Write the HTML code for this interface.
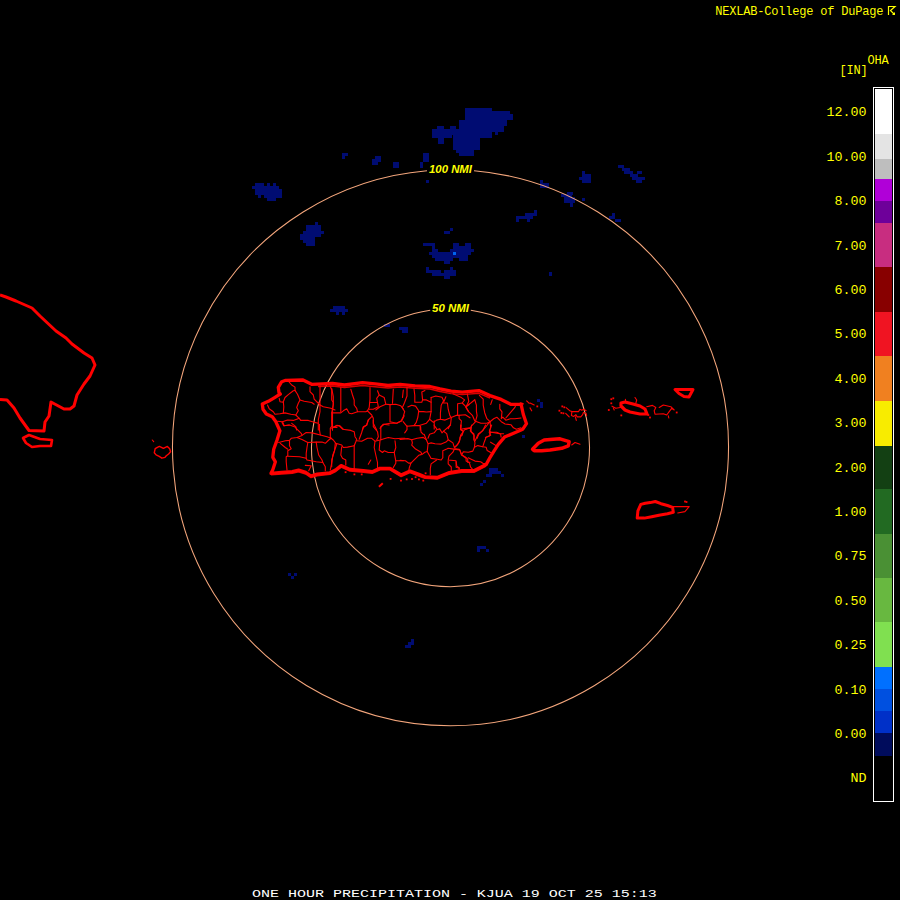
<!DOCTYPE html>
<html><head><meta charset="utf-8"><title>One Hour Precipitation - KJUA</title>
<style>html,body{margin:0;padding:0;background:#000;width:900px;height:900px;overflow:hidden}svg{display:block}</style>
</head><body>
<svg width="900" height="900" viewBox="0 0 900 900">
<rect x="0" y="0" width="900" height="900" fill="#000"/>
<g fill="#000c72" shape-rendering="crispEdges">
<rect x="465" y="108" width="27" height="3"/>
<rect x="465" y="111" width="45" height="3"/>
<rect x="465" y="114" width="48" height="6"/>
<rect x="459" y="120" width="48" height="6"/>
<rect x="437" y="126" width="7" height="3"/>
<rect x="450" y="126" width="6" height="3"/>
<rect x="459" y="126" width="45" height="3"/>
<rect x="432" y="129" width="72" height="3"/>
<rect x="432" y="132" width="60" height="3"/>
<rect x="495" y="132" width="3" height="3"/>
<rect x="432" y="135" width="20" height="3"/>
<rect x="453" y="135" width="39" height="3"/>
<rect x="438" y="138" width="6" height="6"/>
<rect x="453" y="138" width="27" height="12"/>
<rect x="456" y="150" width="18" height="3"/>
<rect x="459" y="153" width="15" height="3"/>
<rect x="255" y="183" width="9" height="3"/>
<rect x="267" y="183" width="3" height="3"/>
<rect x="273" y="183" width="3" height="3"/>
<rect x="252" y="186" width="27" height="3"/>
<rect x="255" y="189" width="27" height="6"/>
<rect x="258" y="195" width="3" height="3"/>
<rect x="264" y="195" width="18" height="3"/>
<rect x="267" y="198" width="9" height="3"/>
<rect x="315" y="222" width="3" height="3"/>
<rect x="306" y="225" width="15" height="6"/>
<rect x="303" y="231" width="18" height="6"/>
<rect x="321" y="231" width="3" height="3"/>
<rect x="300" y="234" width="3" height="6"/>
<rect x="303" y="237" width="12" height="6"/>
<rect x="306" y="243" width="9" height="3"/>
<rect x="342" y="153" width="6" height="3"/>
<rect x="342" y="156" width="3" height="3"/>
<rect x="375" y="156" width="6" height="6"/>
<rect x="372" y="159" width="6" height="6"/>
<rect x="393" y="162" width="6" height="6"/>
<rect x="423" y="153" width="6" height="9"/>
<rect x="420" y="162" width="3" height="6"/>
<rect x="426" y="180" width="3" height="3"/>
<rect x="444" y="231" width="6" height="3"/>
<rect x="450" y="228" width="3" height="3"/>
<rect x="423" y="243" width="12" height="3"/>
<rect x="453" y="243" width="6" height="3"/>
<rect x="465" y="243" width="6" height="3"/>
<rect x="432" y="246" width="3" height="3"/>
<rect x="453" y="246" width="18" height="3"/>
<rect x="432" y="249" width="6" height="3"/>
<rect x="450" y="249" width="24" height="3"/>
<rect x="429" y="252" width="42" height="3"/>
<rect x="432" y="255" width="36" height="3"/>
<rect x="435" y="258" width="18" height="3"/>
<rect x="459" y="258" width="9" height="3"/>
<rect x="444" y="261" width="6" height="3"/>
<rect x="426" y="267" width="3" height="3"/>
<rect x="450" y="267" width="3" height="3"/>
<rect x="426" y="270" width="15" height="3"/>
<rect x="444" y="270" width="12" height="3"/>
<rect x="432" y="273" width="24" height="3"/>
<rect x="444" y="276" width="6" height="3"/>
<rect x="582" y="171" width="3" height="3"/>
<rect x="582" y="174" width="9" height="9"/>
<rect x="579" y="177" width="3" height="3"/>
<rect x="618" y="165" width="6" height="3"/>
<rect x="622" y="168" width="8" height="3"/>
<rect x="624" y="171" width="9" height="3"/>
<rect x="630" y="174" width="8" height="3"/>
<rect x="637" y="171" width="5" height="3"/>
<rect x="632" y="177" width="13" height="3"/>
<rect x="636" y="180" width="6" height="3"/>
<rect x="540" y="180" width="3" height="3"/>
<rect x="540" y="183" width="9" height="5"/>
<rect x="567" y="192" width="6" height="3"/>
<rect x="561" y="194" width="11" height="3"/>
<rect x="564" y="197" width="11" height="6"/>
<rect x="570" y="203" width="3" height="4"/>
<rect x="582" y="198" width="3" height="3"/>
<rect x="534" y="210" width="3" height="3"/>
<rect x="525" y="213" width="12" height="3"/>
<rect x="516" y="216" width="17" height="3"/>
<rect x="516" y="219" width="3" height="3"/>
<rect x="527" y="219" width="3" height="3"/>
<rect x="612" y="213" width="3" height="3"/>
<rect x="609" y="216" width="6" height="3"/>
<rect x="615" y="219" width="6" height="3"/>
<rect x="333" y="306" width="12" height="3"/>
<rect x="330" y="309" width="18" height="3"/>
<rect x="336" y="312" width="3" height="3"/>
<rect x="342" y="312" width="3" height="3"/>
<rect x="384" y="324" width="6" height="3"/>
<rect x="399" y="327" width="9" height="3"/>
<rect x="402" y="330" width="6" height="3"/>
<rect x="549" y="272" width="3" height="4"/>
<rect x="489" y="468" width="9" height="3"/>
<rect x="489" y="471" width="12" height="3"/>
<rect x="486" y="474" width="6" height="3"/>
<rect x="501" y="474" width="3" height="3"/>
<rect x="483" y="480" width="3" height="3"/>
<rect x="480" y="483" width="3" height="3"/>
<rect x="522" y="435" width="3" height="3"/>
<rect x="537" y="399" width="3" height="3"/>
<rect x="540" y="402" width="3" height="6"/>
<rect x="477" y="546" width="9" height="3"/>
<rect x="477" y="549" width="3" height="3"/>
<rect x="486" y="549" width="3" height="3"/>
<rect x="288" y="573" width="3" height="3"/>
<rect x="294" y="573" width="3" height="3"/>
<rect x="291" y="576" width="3" height="3"/>
<rect x="411" y="639" width="3" height="6"/>
<rect x="408" y="642" width="3" height="3"/>
<rect x="405" y="645" width="6" height="3"/>
</g>
<g fill="#0064f0" shape-rendering="crispEdges">
<rect x="453" y="252" width="3" height="3"/>
</g>
<g fill="none" stroke="#f4a67c" stroke-width="1.05">
<path d="M 474.00 170.75 A 278 278 0 1 1 427.00 170.75"/>
<path d="M 470.80 310.24 A 139 139 0 1 1 430.20 310.24"/>
</g>
<g fill="none" stroke="#ff0000" stroke-linejoin="round">
<polygon points="281.7,381.7 285.7,380.3 303.0,380.0 311.7,384.3 332.5,383.5 344.5,385.0 362.5,382.7 377.5,384.2 388.0,385.5 400.0,384.3 415.0,385.8 430.0,386.5 440.0,388.9 451.1,391.1 462.2,392.2 478.9,390.6 490.0,395.6 501.1,399.4 511.1,404.4 521.1,404.4 523.3,414.4 526.5,423.7 522.8,429.2 513.0,433.4 504.5,437.1 498.3,444.4 493.5,451.8 489.8,457.9 486.1,464.6 473.9,470.7 461.7,470.7 449.4,472.6 437.2,477.5 425.0,476.8 418.9,474.4 410.0,471.1 401.1,475.0 390.0,468.3 380.0,468.3 372.2,471.7 363.3,470.6 350.0,469.4 341.1,465.6 335.6,470.0 330.0,472.8 317.2,474.2 311.0,476.0 305.7,472.4 298.6,470.2 292.3,471.6 281.7,472.4 271.0,473.3 272.8,469.8 275.4,461.8 272.8,457.3 273.7,449.3 277.2,439.6 279.9,430.7 275.4,420.9 272.3,416.7 266.3,414.0 263.0,409.3 262.3,404.0 268.3,401.3 275.0,397.3 280.3,394.0 279.0,392.7 278.3,387.3" stroke-width="3.3"/>
<polyline points="0.0,295.0 6.0,297.0 16.0,301.0 32.0,308.0 40.0,316.0 56.0,331.0 66.0,338.0 72.0,344.0 84.0,353.0 92.0,358.0 95.0,365.0 90.0,376.0 84.0,384.0 77.0,395.0 74.0,406.0 70.0,409.0 64.0,409.0 51.0,402.0 49.0,416.0 45.0,422.0 44.0,431.0 29.0,430.5 20.0,418.0 14.0,408.0 7.0,400.0 0.0,399.6" stroke-width="3"/>
<polyline points="318.0,386.5 332.5,386.0 344.5,387.5 362.5,385.5 377.5,387.0 388.0,388.0 400.0,387.0 415.0,388.3 430.0,389.0 440.0,391.5 451.1,393.6 462.2,394.6 478.9,393.3 490.0,398.0" stroke-width="1.4" opacity="0.85"/>
<polyline points="486.1,466.1 473.9,472.2 461.7,472.2 449.4,474.1 437.2,479.0 425.0,478.3 418.9,475.9 410.0,472.6 401.1,476.5 390.0,469.8 380.0,469.8 372.2,473.2 363.3,472.1 350.0,470.9 341.1,467.1 335.6,471.5 330.0,474.3 317.2,475.7 311.0,477.5 305.7,473.9 298.6,471.7 292.3,473.1 281.7,473.9 271.0,474.8" stroke-width="1.6" opacity="0.9"/>
<polyline points="378.9,486.7 382.8,483.3" stroke-width="2"/>
<polygon points="23.0,438.0 29.0,435.0 40.0,439.0 52.0,440.0 51.0,446.0 40.0,446.0 32.0,447.0 26.0,443.0" stroke-width="2.6"/>
<polygon points="155.2,448.7 157.4,447.3 159.4,446.4 161.4,447.3 163.4,448.4 165.4,447.3 167.4,446.4 169.7,448.7 170.6,451.8 168.6,454.0 166.3,455.8 165.0,457.3 161.9,458.2 159.2,456.4 156.1,454.9 154.3,452.7" stroke-width="1.4"/>
<polygon points="532.5,449.2 538.3,443.3 544.2,440.0 553.3,439.2 560.0,438.8 569.2,441.7 568.3,445.8 561.7,448.3 550.0,450.0 541.7,450.8 534.2,450.8" stroke-width="3.4"/>
<polygon points="621.0,403.0 625.0,402.0 633.0,404.0 640.0,406.0 645.0,409.0 647.0,414.0 640.0,414.0 630.0,412.0 625.0,410.0 621.0,406.0" stroke-width="3.2"/>
<polygon points="675.0,389.5 693.0,389.5 689.0,397.0 684.0,396.5 679.0,393.5" stroke-width="3"/>
<polygon points="637.2,518.1 637.9,510.9 640.8,504.4 645.2,503.3 650.2,502.6 655.3,501.5 661.0,503.7 667.5,505.5 672.6,507.3 673.3,512.3 667.5,513.8 658.9,515.2 651.7,516.7 644.4,518.1" stroke-width="3"/>
</g>
<g fill="none" stroke="#ff0000" stroke-width="1.1" stroke-linejoin="round" stroke-linecap="round">
<polyline points="566.1,407.6 569.7,410.7 571.9,411.6 578.6,411.6 579.9,409.3 581.7,410.2 583.9,409.3 586.1,410.7"/>
<polyline points="571.9,411.6 571.4,415.6 573.7,416.4 575.9,414.7 577.2,416.9 580.8,416.9 582.6,414.7 583.4,412.4 586.1,413.3 586.6,415.6"/>
<polyline points="575.4,416.9 576.3,420.4"/>
<polyline points="565.7,413.3 569.2,416.9"/>
<polyline points="571.7,445.0 575.0,442.5 580.0,444.2"/>
<polyline points="646.7,406.7 652.5,405.4 655.8,407.5 654.2,410.8 655.0,414.2 663.3,413.8 666.7,415.0 669.2,411.7 671.7,408.3 674.2,410.0 670.8,406.7 663.3,405.0 659.2,407.5"/>
<polyline points="612.0,406.2 615.8,408.3 620.4,407.5"/>
<polyline points="613.3,407.9 614.2,410.0"/>
<polyline points="635.0,397.5 636.7,400.0 635.8,403.3"/>
<polyline points="625.4,399.2 625.8,402.5"/>
<polyline points="668.3,415.8 668.8,418.0"/>
<polyline points="673.3,506.6 689.2,506.6 684.9,511.6 677.7,513.0"/>
<polyline points="152.3,440.0 153.7,441.6"/>
<polyline points="526.7,400.8 529.2,403.3"/>
<polyline points="530.0,402.9 534.2,405.0"/>
<polyline points="530.0,407.9 531.7,410.8"/>
</g>
<g fill="#ff0000">
<rect x="389.7" y="478.0" width="1.8" height="1.8"/>
<rect x="400.1" y="479.7" width="1.8" height="1.8"/>
<rect x="405.8" y="478.5" width="1.8" height="1.8"/>
<rect x="411.1" y="478.1" width="1.8" height="1.8"/>
<rect x="414.7" y="476.3" width="1.8" height="1.8"/>
<rect x="418.0" y="478.5" width="1.8" height="1.8"/>
<rect x="422.4" y="479.7" width="1.8" height="1.8"/>
<rect x="353.5" y="473.5" width="1.8" height="1.8"/>
<rect x="360.8" y="473.5" width="1.8" height="1.8"/>
<rect x="344.7" y="471.3" width="1.8" height="1.8"/>
<rect x="424.7" y="472.4" width="1.8" height="1.8"/>
<rect x="561.4" y="405.5" width="1.8" height="1.8"/>
<rect x="563.4" y="406.4" width="1.8" height="1.8"/>
<rect x="558.5" y="409.8" width="1.8" height="1.8"/>
<rect x="560.5" y="412.0" width="1.8" height="1.8"/>
<rect x="562.5" y="412.4" width="1.8" height="1.8"/>
<rect x="607.9" y="409.1" width="1.8" height="1.8"/>
<rect x="610.4" y="398.3" width="1.8" height="1.8"/>
<rect x="612.4" y="397.4" width="1.8" height="1.8"/>
<rect x="610.4" y="402.4" width="1.8" height="1.8"/>
<rect x="620.4" y="414.5" width="1.8" height="1.8"/>
<rect x="675.8" y="411.6" width="1.8" height="1.8"/>
<rect x="647.4" y="414.1" width="1.8" height="1.8"/>
<rect x="649.1" y="416.6" width="1.8" height="1.8"/>
<rect x="536.4" y="405.5" width="1.8" height="1.8"/>
<rect x="684.1" y="500.6" width="1.8" height="1.8"/>
<rect x="685.6" y="501.1" width="1.8" height="1.8"/>
</g>
<g fill="none" stroke="#ff0000" stroke-width="1.1" stroke-linejoin="round" stroke-linecap="round">
<polyline points="289.2,382.1 291.7,385.0 295.0,387.1 295.0,390.4 293.3,390.8 288.3,394.6 285.0,397.5 283.3,401.7 283.8,406.7 283.3,413.3"/>
<polyline points="295.0,390.4 297.5,394.2 300.0,400.0 298.3,403.3 296.7,407.5 298.3,410.8 295.8,415.0 299.2,418.3 300.8,420.4"/>
<polyline points="300.0,400.0 304.2,401.2 311.7,402.5 314.2,404.2"/>
<polyline points="279.2,398.3 280.0,401.7 283.3,402.1"/>
<polyline points="267.5,405.0 269.2,408.8 273.3,411.7 275.0,414.2 280.0,413.8 285.0,412.9 290.8,414.2 295.8,415.0"/>
<polyline points="300.8,420.4 308.3,420.4 313.3,422.1 318.3,423.3"/>
<polyline points="277.5,421.2 282.5,421.7 287.5,420.0 293.3,420.4 296.7,419.2 299.2,418.3"/>
<polyline points="282.5,421.7 284.2,425.8 289.2,425.0"/>
<polyline points="291.7,423.3 295.8,426.7 296.7,430.0"/>
<polyline points="320.0,385.8 320.0,405.0 320.0,411.7 318.3,420.0 318.3,430.0"/>
<polyline points="310.0,386.7 310.0,391.7 313.3,395.0 314.2,399.2 317.5,402.5 320.0,405.0"/>
<polyline points="320.0,405.0 323.3,406.7 330.8,408.3 335.0,410.0"/>
<polyline points="330.0,385.8 331.7,390.0 331.7,400.0 333.3,402.5 332.5,412.5 332.5,425.0 332.5,430.0"/>
<polyline points="278.7,442.5 285.3,440.8 289.5,440.4 291.2,438.3 297.0,437.5 302.0,435.4 306.2,432.5 312.0,432.9 320.3,435.0 327.0,436.7 331.2,438.3"/>
<polyline points="297.0,437.5 302.0,439.6 307.8,442.5 316.2,442.1 322.0,442.1 325.3,443.3 328.7,440.0 331.2,438.3"/>
<polyline points="289.5,440.4 289.5,445.8 291.2,448.8 287.8,450.8 287.8,455.8 286.2,456.7 286.2,461.7 287.0,470.0"/>
<polyline points="280.3,443.3 285.3,447.5 287.8,449.2"/>
<polyline points="287.8,456.2 299.5,456.7 306.2,458.3 307.0,460.0 311.2,460.8"/>
<polyline points="307.8,442.5 307.0,447.5 306.2,453.3 306.2,458.3"/>
<polyline points="311.2,460.8 316.2,461.7 322.8,462.5 325.3,466.7 325.3,470.8"/>
<polyline points="305.3,465.4 311.2,465.8 308.7,470.8"/>
<polyline points="316.2,442.1 317.0,447.5 318.7,455.0 322.0,460.0 322.8,462.5"/>
<polyline points="335.3,443.3 334.5,450.8 332.8,455.0 332.0,461.7 330.3,470.0"/>
<polyline points="282.0,422.5 283.7,425.8 289.5,425.0 294.5,426.7 298.7,430.8 301.2,433.3 302.0,435.4"/>
<polyline points="319.5,424.2 319.5,430.0 320.3,435.0"/>
<polyline points="332.0,420.0 332.0,425.8 330.3,428.3 330.3,438.3"/>
<polyline points="332.8,427.5 337.0,427.5"/>
<polyline points="331.7,388.3 333.3,396.7 333.3,405.0 331.7,412.5 331.7,421.7 332.5,430.0"/>
<polyline points="340.8,387.5 340.8,396.7 340.8,411.7"/>
<polyline points="331.7,412.9 340.8,412.9 343.3,410.8 346.7,408.8 349.2,413.3 351.7,413.8 357.5,411.7 365.8,411.7 367.5,410.8"/>
<polyline points="350.8,389.2 352.5,395.0 354.2,400.0 354.2,405.0 356.7,408.3 357.5,411.7"/>
<polyline points="370.0,387.5 370.0,399.2 369.2,407.5 367.5,410.8"/>
<polyline points="370.0,402.5 377.5,402.5 378.3,406.7 373.3,409.2 369.2,409.2"/>
<polyline points="377.5,390.8 379.2,395.0 376.7,398.3 377.5,402.5"/>
<polyline points="379.2,395.0 384.2,397.5 385.8,404.2 380.0,406.7 375.8,410.0"/>
<polyline points="385.8,404.2 390.0,404.6 395.8,404.2 400.8,405.8 403.3,409.2"/>
<polyline points="393.3,389.2 392.5,403.3"/>
<polyline points="390.0,404.6 390.0,421.7 396.7,423.3 401.7,420.8 404.2,415.8"/>
<polyline points="367.5,410.8 371.7,415.0 373.3,418.3 373.3,423.3 376.7,430.0"/>
<polyline points="371.7,416.7 368.3,420.0 366.7,425.0 363.3,427.5 362.5,430.0"/>
<polyline points="332.5,427.5 336.7,425.4 340.0,425.8 343.3,429.2"/>
<polyline points="389.2,425.0 383.3,424.2 380.0,428.3"/>
<polyline points="403.3,390.0 402.5,397.5"/>
<polyline points="331.7,428.3 336.7,425.8 339.2,425.8 342.5,429.2 350.8,430.4 354.2,431.7 355.0,436.7 356.7,439.2 355.8,441.7 354.2,445.8"/>
<polyline points="330.0,437.5 333.3,440.0 335.8,443.3 341.7,445.0 343.3,447.5 347.5,447.1 354.2,445.8"/>
<polyline points="354.2,445.8 354.2,457.5 354.2,469.2"/>
<polyline points="336.7,444.2 335.0,449.2 333.3,455.0 331.7,460.0 331.7,466.7"/>
<polyline points="341.7,446.7 340.8,455.0 342.5,458.3 345.8,460.0 345.8,465.0"/>
<polyline points="356.7,440.8 361.7,441.2 367.5,438.3 371.7,438.3 375.0,441.2 380.0,440.0 388.3,437.5 395.0,438.8 401.7,438.3 405.0,438.3"/>
<polyline points="359.2,439.2 361.7,432.5 363.3,426.7 366.7,425.0 368.3,420.0"/>
<polyline points="373.3,420.0 373.3,426.7 377.5,431.7 378.3,436.7 376.7,440.0"/>
<polyline points="375.0,441.2 374.2,447.5 375.8,455.0 377.5,462.5 377.5,467.5"/>
<polyline points="380.0,440.8 379.2,450.0 382.5,452.5 384.2,450.8 388.3,452.5 394.2,452.5 395.8,447.5 395.0,440.8"/>
<polyline points="380.8,440.0 380.8,430.0 380.8,426.7 384.2,424.2 390.0,423.3 396.7,423.3 401.7,420.8"/>
<polyline points="394.2,452.5 395.8,460.8 403.3,460.8"/>
<polyline points="395.8,460.8 395.8,463.3 393.3,467.5"/>
<polyline points="368.3,464.2 370.8,460.0"/>
<polyline points="407.0,387.4 407.0,396.0 404.7,402.2 402.3,407.7 404.7,411.6 403.1,417.0 401.6,420.1"/>
<polyline points="414.0,389.0 414.8,395.2 414.8,402.2 421.8,402.2 422.6,399.9 426.4,399.9 431.1,402.2"/>
<polyline points="422.6,399.9 421.8,392.1 424.9,390.6"/>
<polyline points="431.1,397.6 431.1,411.6 429.6,419.3 426.4,423.2 419.4,425.6 414.0,425.6 407.0,426.3 403.1,421.7"/>
<polyline points="407.8,406.9 411.7,405.3 415.6,406.1 418.7,410.8 417.9,417.0 416.3,422.4 414.0,425.6"/>
<polyline points="418.7,411.6 423.3,411.6 426.4,412.0 431.1,411.6"/>
<polyline points="431.1,397.6 435.8,396.0 442.0,397.2 443.6,400.7 441.2,405.3 440.4,413.1 440.4,419.3 445.1,420.1 450.6,417.8 456.0,415.4 458.3,415.4 465.3,414.7 470.0,417.8"/>
<polyline points="429.6,419.3 433.4,422.4 436.6,420.1 440.4,419.3"/>
<polyline points="443.6,403.0 447.4,403.0 448.2,409.2 449.8,415.4 451.3,417.8 450.6,424.0 448.2,428.7"/>
<polyline points="445.9,396.8 443.6,402.2"/>
<polyline points="452.9,393.7 461.4,397.6 464.6,399.9 462.2,403.0 457.6,403.8 457.6,414.7"/>
<polyline points="462.2,403.0 466.1,406.9 469.2,404.6"/>
<polyline points="459.1,415.4 459.1,418.6 461.4,420.9 460.7,427.9"/>
<polyline points="434.2,420.9 434.2,425.6 436.6,428.7"/>
<polyline points="420.2,426.3 420.2,430.0"/>
<polyline points="466.1,406.9 468.4,411.6"/>
<polyline points="400.0,439.4 407.8,438.6 411.7,439.8 412.4,442.9 411.7,445.2 415.6,449.1 421.0,452.2 421.8,454.6 424.9,452.2 427.2,451.4"/>
<polyline points="411.7,439.8 417.1,438.2 423.3,437.4 426.4,439.8 428.0,443.7 431.1,442.9 435.0,443.7 441.2,444.1 445.9,442.1 448.2,439.8 446.7,433.6 443.6,431.2 442.0,432.8 439.7,428.9 436.6,429.7 434.2,432.8 429.6,434.3 428.0,438.2"/>
<polyline points="423.3,434.3 421.0,432.0 420.6,426.6"/>
<polyline points="426.4,439.8 424.1,434.3"/>
<polyline points="443.6,431.2 450.6,425.0"/>
<polyline points="434.2,425.0 434.2,428.9"/>
<polyline points="428.0,444.4 427.2,451.4 430.3,456.9 431.1,458.4 437.3,459.2 441.2,460.0 442.8,457.7 442.8,450.7 446.7,449.1 448.2,448.3 453.7,449.1 459.9,449.9 461.4,454.6 465.3,456.9 467.7,459.2 467.7,462.3 470.0,462.3"/>
<polyline points="448.2,439.8 452.9,442.9 454.4,447.6 457.6,444.4 459.9,439.8 460.7,435.1 463.0,432.0 464.6,429.7 467.7,428.5 470.0,428.5"/>
<polyline points="460.7,425.0 460.7,429.7 463.0,431.2"/>
<polyline points="454.4,449.1 452.9,452.2 449.0,456.1 448.2,460.0 456.0,460.8 456.8,466.2 459.1,467.8 459.1,470.9"/>
<polyline points="448.2,460.8 448.2,463.9 451.3,467.0 451.3,471.7"/>
<polyline points="436.6,460.0 431.1,463.9 430.3,468.6 430.3,474.8"/>
<polyline points="400.0,460.4 405.4,460.8 408.6,463.1 410.9,463.1 418.7,455.3 421.0,454.6"/>
<polyline points="410.9,463.1 409.3,467.8 408.6,471.7"/>
<polyline points="404.7,432.8 407.0,429.7 407.0,425.8"/>
<polyline points="467.3,393.8 468.8,401.3 465.8,407.4 468.8,411.9 472.6,415.7 474.8,421.0 480.9,423.2 486.9,423.2 490.0,421.7"/>
<polyline points="474.8,399.8 476.4,405.1 476.4,411.2 477.1,415.7 475.6,421.0"/>
<polyline points="479.4,395.3 483.2,399.1 483.2,405.1 484.7,412.7 486.9,418.7 490.0,421.7"/>
<polyline points="474.8,399.8 471.1,402.8 465.8,406.6"/>
<polyline points="475.6,421.7 471.1,426.3 470.3,430.8 474.1,435.3 474.1,440.0"/>
<polyline points="490.0,421.7 490.7,427.8 489.2,432.3 490.7,435.3 485.4,437.6"/>
<polyline points="490.0,421.7 493.7,418.7 496.8,417.2 501.3,421.7 505.1,424.0 511.1,424.8 513.4,427.8 516.4,429.3 521.0,427.8"/>
<polyline points="499.8,404.4 499.8,408.9 502.0,411.9 501.3,418.7 502.8,417.2 505.8,420.2 510.4,418.7 514.9,418.7 521.0,418.0"/>
<polyline points="505.8,418.0 510.4,412.7 514.9,407.4 516.4,403.6"/>
<polyline points="492.2,399.8 490.7,404.4"/>
<polyline points="490.0,421.7 486.9,425.5 483.2,430.0 478.6,434.6 477.1,438.4"/>
<polyline points="465.8,429.3 470.3,427.8"/>
<polyline points="491.5,432.3 499.8,433.8 503.6,433.8"/>
<polyline points="520.2,402.8 523.2,403.6 521.7,407.4"/>
<polyline points="461.1,425.0 460.6,429.4 463.3,431.1 462.2,435.0 460.0,437.2 459.4,441.7 457.2,445.0 455.0,447.2"/>
<polyline points="460.6,429.4 466.1,428.3 471.1,427.8 471.7,425.0"/>
<polyline points="471.1,427.8 471.1,431.7 473.9,433.9 473.9,439.4 475.0,442.8 474.4,447.2 472.8,451.1 468.3,452.2 463.3,451.7 461.7,455.0 466.1,458.3 466.1,461.1 469.4,462.8 470.6,467.2 472.2,468.9"/>
<polyline points="474.4,447.2 477.8,445.6 482.8,446.7 486.1,447.2 487.2,450.6 491.1,452.8"/>
<polyline points="475.0,441.1 478.3,433.9 482.8,430.6 485.6,425.0"/>
<polyline points="482.8,446.7 484.4,441.7 486.1,437.2 489.4,436.1 490.6,432.2 489.4,430.6 491.7,425.0"/>
<polyline points="490.6,432.2 496.7,432.2 500.6,433.9 501.1,437.2"/>
<polyline points="490.6,442.2 496.1,445.6"/>
<polyline points="455.0,448.9 459.4,449.4 460.6,452.2 461.7,455.0"/>
<polyline points="468.3,457.8 471.7,459.4 475.0,461.1 480.6,461.7 482.8,463.3 485.6,463.9"/>
<polyline points="456.1,461.7 456.1,467.2 459.4,468.3"/>
</g>
<g fill="#ffff00" font-family="Liberation Sans, sans-serif" font-weight="bold" font-style="italic">
<text x="429" y="173" font-size="11" textLength="43" lengthAdjust="spacingAndGlyphs">100 NMI</text>
<text x="432" y="312" font-size="11" textLength="37" lengthAdjust="spacingAndGlyphs">50 NMI</text>
</g>
<rect x="873.5" y="87.5" width="20" height="714" fill="none" stroke="#fff" stroke-width="1" shape-rendering="crispEdges"/>
<g shape-rendering="crispEdges">
<rect x="875" y="89" width="17" height="45" fill="#ffffff"/>
<rect x="875" y="134" width="17" height="25" fill="#e4e4e4"/>
<rect x="875" y="159" width="17" height="20" fill="#bebebe"/>
<rect x="875" y="179" width="17" height="22" fill="#b000d8"/>
<rect x="875" y="201" width="17" height="22" fill="#6e009a"/>
<rect x="875" y="223" width="17" height="44" fill="#c82d80"/>
<rect x="875" y="267" width="17" height="45" fill="#880000"/>
<rect x="875" y="312" width="17" height="44" fill="#f01422"/>
<rect x="875" y="356" width="17" height="45" fill="#f08020"/>
<rect x="875" y="401" width="17" height="45" fill="#f8ec00"/>
<rect x="875" y="446" width="17" height="43" fill="#134013"/>
<rect x="875" y="489" width="17" height="45" fill="#226a22"/>
<rect x="875" y="534" width="17" height="44" fill="#4a9034"/>
<rect x="875" y="578" width="17" height="44" fill="#68b840"/>
<rect x="875" y="622" width="17" height="45" fill="#80e050"/>
<rect x="875" y="667" width="17" height="22" fill="#0070ff"/>
<rect x="875" y="689" width="17" height="22" fill="#0050e0"/>
<rect x="875" y="711" width="17" height="22" fill="#0030c8"/>
<rect x="875" y="733" width="17" height="23" fill="#000c5c"/>
</g>
<g fill="#ffff00" font-family="Liberation Mono, monospace" font-size="13.33" text-anchor="end">
<text x="866.5" y="116.3">12.00</text>
<text x="866.5" y="160.7">10.00</text>
<text x="866.5" y="205.1">8.00</text>
<text x="866.5" y="249.5">7.00</text>
<text x="866.5" y="293.9">6.00</text>
<text x="866.5" y="338.3">5.00</text>
<text x="866.5" y="382.7">4.00</text>
<text x="866.5" y="427.1">3.00</text>
<text x="866.5" y="471.5">2.00</text>
<text x="866.5" y="515.9">1.00</text>
<text x="866.5" y="560.3">0.75</text>
<text x="866.5" y="604.7">0.50</text>
<text x="866.5" y="649.1">0.25</text>
<text x="866.5" y="693.5">0.10</text>
<text x="866.5" y="737.9">0.00</text>
<text x="866.5" y="782.3">ND</text>
</g>
<g fill="#ffff00" font-family="Liberation Mono, monospace" font-size="12">
<text x="715.3" y="15" letter-spacing="-0.2">NEXLAB-College of DuPage</text>
<text x="839.5" y="74" letter-spacing="-0.2">[IN]</text>
<text x="867.5" y="64.3" letter-spacing="-0.2">OHA</text>
</g>
<g stroke="#ffff00" stroke-width="1.2" fill="none"><path d="M888.5 15 V6.5 H895 L890.5 10.5 L894 14"/></g>
<path d="M895 12 V15 H892 Z" fill="#ffff00"/>
<text transform="translate(252,897) scale(1,0.76)" x="0" y="0" fill="#ffffff" font-family="Liberation Mono, monospace" font-size="15">ONE HOUR PRECIPITATION - KJUA 19 OCT 25 15:13</text>
</svg>
</body></html>
